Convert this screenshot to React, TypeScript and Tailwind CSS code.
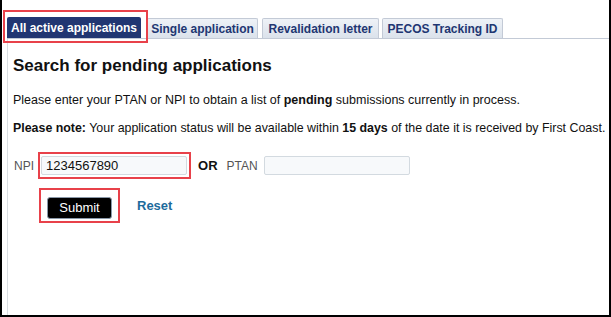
const tabs = ["Single application", "Revalidation letter", "PECOS Tracking ID"];
const tabWidths = ["w-[111px] ml-[6px]", "w-[117px] ml-[4px]", "w-[121px] ml-[3px]"];

export default function App() {
  return (
    <div className="w-[611px] h-[317px] bg-white border-l-2 border-r-2 border-b-2 border-black font-['Liberation_Sans',Arial,sans-serif] overflow-hidden">
      <div className="pl-[5px] pt-[17px] h-full flex flex-col">
        {/* tab strip */}
        <div className="flex items-end border-b border-[#c3cad6] h-[22px]">
          <div className="relative w-[134px] h-[21px] bg-[#213672] text-white text-[12px] font-bold flex items-center justify-center rounded-t-[2px]">
            All active applications
            <span className="absolute left-[-4px] top-[-7px] w-[145px] h-[33px] border-2 border-[#e8414a]" />
          </div>
          {tabs.map((t, i) => (
            <div
              key={t}
              className={`${tabWidths[i]} h-[20px] bg-gradient-to-b from-[#eef2f7] to-[#dbe2eb] border border-b-0 border-[#c3cad6] rounded-t-[2px] text-[#213672] text-[12px] font-bold flex items-center justify-center`}
            >
              {t}
            </div>
          ))}
        </div>

        {/* panel */}
        <div className="flex-1 border-l border-[#d9dee2] pl-[5px] text-[#111]">
          <h1 className="mt-[18px] text-[17px] leading-[18px] font-bold text-[#111]">Search for pending applications</h1>
          <p className="mt-[18px] text-[12.5px] leading-[14px]">
            Please enter your PTAN or NPI to obtain a list of <b>pending</b> submissions currently in process.
          </p>
          <p className="mt-[14px] text-[12.4px] leading-[14px] whitespace-nowrap">
            <b>Please note:</b> Your application status will be available within <b>15 days</b> of the date it is received by First Coast.
          </p>

          <div className="mt-[21px] flex items-center h-[19px] text-[12px]">
            <span className="ml-[1px] text-[#555]">NPI</span>
            <div className="relative ml-[7px]">
              <input
                defaultValue="1234567890"
                className="w-[146px] h-[19px] border border-[#d3dae0] rounded-[2px] bg-[#f7f9fb] px-[4px] text-[13px] text-[#111] outline-none"
              />
              <span className="absolute left-[-3px] top-[-4px] w-[153px] h-[27px] border-2 border-[#e8414a] pointer-events-none" />
            </div>
            <span className="ml-[11px] font-bold text-[13px] text-[#111]">OR</span>
            <span className="ml-[9px] text-[#555]">PTAN</span>
            <input className="ml-[6px] w-[146px] h-[19px] border border-[#d3dae0] rounded-[2px] bg-[#f7f9fb] outline-none" />
          </div>

          <div className="mt-[20px] flex items-center">
            <div className="relative ml-[34px]">
              <button className="w-[65px] h-[22px] bg-black border border-[#8a98a8] rounded-[3px] text-white text-[13px] leading-none">
                Submit
              </button>
              <span className="absolute left-[-8px] top-[-7px] w-[81px] h-[35px] border-2 border-[#e8414a] pointer-events-none" />
            </div>
            <a className="ml-[25px] text-[13px] font-bold text-[#1d6b9c] -mt-[3px]">Reset</a>
          </div>
        </div>
      </div>
    </div>
  );
}
